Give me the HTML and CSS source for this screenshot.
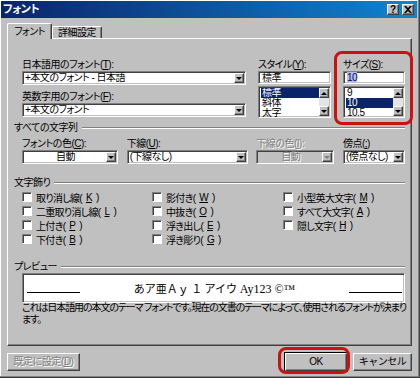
FILE: index.html
```html
<!DOCTYPE html>
<html lang="ja">
<head>
    <meta charset="UTF-8">
    <title>フォント</title>
    <link rel="stylesheet" href="styles.css">
</head>
<body>
    <div class="window">
        <div class="titlebar">
            <span class="title">フォント</span>
            <div class="caption-btns">
                <span class="cap-btn">?</span>
                <span class="cap-btn">
                    <svg width="8" height="7" viewBox="0 0 8 7"><path d="M0 0h2l2 2 2-2h2L5 3.5 8 7H6L4 5 2 7H0l3-3.5z" fill="#000"/></svg>
                </span>
            </div>
        </div>

        <div class="content">
            <div class="tabs">
                <div class="tab active">フォント</div>
                <div class="tab">詳細設定</div>
            </div>

            <div class="panel">
                <!-- font / style / size -->
                <div class="font-row">
                    <div class="col">
                        <div class="lbl">日本語用のフォント(<u>T</u>):</div>
                        <div class="combo"><span class="val">+本文のフォント - 日本語</span><span class="drop"></span></div>
                        <div class="lbl second">英数字用のフォント(<u>F</u>):</div>
                        <div class="combo"><span class="val">+本文のフォント</span><span class="drop"></span></div>
                    </div>
                    <div class="col">
                        <div class="lbl">スタイル(<u>Y</u>):</div>
                        <div class="field">標準</div>
                        <div class="listbox">
                            <div class="items">
                                <div class="item sel">標準</div>
                                <div class="item">斜体</div>
                                <div class="item">太字</div>
                            </div>
                            <div class="vscroll">
                                <span class="sbtn up"></span>
                                <span class="track"></span>
                                <span class="sbtn down"></span>
                            </div>
                        </div>
                    </div>
                    <div class="col size-col">
                        <div class="lbl">サイズ(<u>S</u>):</div>
                        <div class="field"><span class="hl">10</span></div>
                        <div class="listbox">
                            <div class="items">
                                <div class="item">9</div>
                                <div class="item sel">10</div>
                                <div class="item">10.5</div>
                            </div>
                            <div class="vscroll">
                                <span class="sbtn up"></span>
                                <span class="track"></span>
                                <span class="sbtn down"></span>
                            </div>
                        </div>
                        <div class="mark"></div>
                    </div>
                </div>

                <!-- all text -->
                <div class="group">すべての文字列</div>
                <div class="attr-row">
                    <div>
                        <div class="lbl">フォントの色(<u>C</u>):</div>
                        <div class="combo"><span class="val center">自動</span><span class="drop"></span></div>
                    </div>
                    <div>
                        <div class="lbl">下線(<u>U</u>):</div>
                        <div class="combo"><span class="val">(下線なし)</span><span class="drop"></span></div>
                    </div>
                    <div>
                        <div class="lbl disabled">下線の色(<u>I</u>):</div>
                        <div class="combo off"><span class="val center">自動</span><span class="drop"></span></div>
                    </div>
                    <div>
                        <div class="lbl">傍点(<u>;</u>)</div>
                        <div class="combo"><span class="val">(傍点なし)</span><span class="drop"></span></div>
                    </div>
                </div>

                <!-- effects -->
                <div class="group second-group">文字飾り</div>
                <div class="checks">
                    <label class="chk"><span class="box"></span>取り消し線(<u>K</u>)</label>
                    <label class="chk"><span class="box"></span>二重取り消し線(<u>L</u>)</label>
                    <label class="chk"><span class="box"></span>上付き(<u>P</u>)</label>
                    <label class="chk"><span class="box"></span>下付き(<u>B</u>)</label>
                    <label class="chk"><span class="box"></span>影付き(<u>W</u>)</label>
                    <label class="chk"><span class="box"></span>中抜き(<u>O</u>)</label>
                    <label class="chk"><span class="box"></span>浮き出し(<u>E</u>)</label>
                    <label class="chk"><span class="box"></span>浮き彫り(<u>G</u>)</label>
                    <label class="chk"><span class="box"></span>小型英大文字(<u>M</u>)</label>
                    <label class="chk"><span class="box"></span>すべて大文字(<u>A</u>)</label>
                    <label class="chk"><span class="box"></span>隠し文字(<u>H</u>)</label>
                </div>

                <!-- preview -->
                <div class="group third-group">プレビュー</div>
                <div class="preview">
                    <span class="rule"></span>
                    <span class="sample"><span class="jp">あア亜Ａｙ １ アイウ</span> <span class="en">Ay123 ©™</span></span>
                    <span class="rule"></span>
                </div>
                <p class="desc">これは日本語用の本文のテーマ フォントです。現在の文書のテーマによって、使用されるフォントが決まり<br>ます。</p>
            </div>

            <div class="buttons">
                <button class="btn wide" disabled>既定に設定(<u>D</u>)</button>
                <div class="right-btns">
                    <div class="ok-wrap">
                        <button class="btn default">OK</button>
                        <div class="mark"></div>
                    </div>
                    <button class="btn">キャンセル</button>
                </div>
            </div>
        </div>
    </div>
</body>
</html>
```

FILE: styles.css
```css
body {
    margin: 0;
    padding: 0;
    font-family: 'Liberation Sans', 'Noto Sans CJK JP', sans-serif;
    font-size: 10px;
    letter-spacing: -0.5px;
    font-feature-settings: "palt";
    text-autospace: no-autospace;
    color: #000;
    background: #c0c0c0;
}

u {
    text-decoration: underline;
    text-underline-offset: 1px;
}

/* Window frame */
.window {
    width: 420px;
    height: 378px;
    box-sizing: border-box;
    padding: 1px 2px 2px 1px;
    background: #c0c0c0;
    border-right: 1px solid #404040;
    border-bottom: 1px solid #404040;
    box-shadow: inset -1px -1px #808080, inset 1px 1px #fff;
}

.titlebar {
    height: 17px;
    display: flex;
    justify-content: space-between;
    align-items: center;
    padding: 0 3px 0 2px;
    background: linear-gradient(to right, #0a246a, #1084d0);
}

.title {
    color: #fff;
    font-weight: bold;
    font-size: 11px;
    line-height: 17px;
}

.caption-btns {
    display: flex;
    gap: 3px;
}

.cap-btn {
    width: 12px;
    height: 11px;
    box-sizing: border-box;
    display: flex;
    align-items: center;
    justify-content: center;
    background: #c0c0c0;
    border-top: 1px solid #fff;
    border-left: 1px solid #fff;
    border-right: 1px solid #404040;
    border-bottom: 1px solid #404040;
    box-shadow: inset -1px -1px #808080;
    font-weight: bold;
    font-size: 10px;
    line-height: 9px;
    letter-spacing: 0;
}

.content {
    padding: 0 5px 0 6px;
}

/* Tabs */
.tabs {
    display: flex;
    align-items: flex-end;
    height: 15px;
    margin-top: 5px;
}

.tab {
    height: 12px;
    box-sizing: border-box;
    width: 50px;
    text-align: center;
    line-height: 12px;
    border-top: 1px solid #fff;
    border-left: 1px solid #fff;
    border-right: 1px solid #404040;
    border-radius: 2px 2px 0 0;
    box-shadow: inset -1px 0 #808080;
}

.tab.active {
    width: 45px;
    height: 16px;
    line-height: 16px;
    margin-bottom: -1px;
    position: relative;
    z-index: 1;
    background: #c0c0c0;
}

/* Panel */
.panel {
    height: 308px;
    box-sizing: border-box;
    padding: 19px 6px 0 14px;
    border-top: 1px solid #fff;
    border-left: 1px solid #fff;
    border-right: 1px solid #404040;
    border-bottom: 1px solid #404040;
    box-shadow: inset -1px -1px #808080;
}

.lbl {
    height: 13px;
    line-height: 13px;
    white-space: nowrap;
}

.lbl.second {
    margin-top: 5px;
}

.lbl.disabled {
    color: #808080;
    text-shadow: 1px 1px #fff;
}

.font-row {
    display: grid;
    grid-template-columns: 224px 73px 62px;
    column-gap: 12px;
}

.size-col {
    position: relative;
}

.mark {
    position: absolute;
    border: 3px solid #cc1111;
    border-radius: 8px;
}

.size-col .mark {
    top: -7px;
    left: -9px;
    right: -8px;
    bottom: -7px;
}

/* sunken fields */
.combo, .field, .listbox, .preview {
    box-sizing: border-box;
    background: #fff;
    border-top: 1px solid #808080;
    border-left: 1px solid #808080;
    border-right: 1px solid #fff;
    border-bottom: 1px solid #fff;
    box-shadow: inset 1px 1px #404040, inset -1px -1px #c0c0c0;
}

.combo {
    height: 14px;
    display: flex;
    align-items: center;
    padding: 0 1px 0 2px;
}

.combo .val {
    flex: 1;
    line-height: 12px;
    white-space: nowrap;
    overflow: hidden;
}

.combo .val.center {
    text-align: center;
}

.drop, .sbtn {
    width: 10px;
    height: 10px;
    box-sizing: border-box;
    display: flex;
    align-items: center;
    justify-content: center;
    background: #c0c0c0;
    border-top: 1px solid #fff;
    border-left: 1px solid #fff;
    border-right: 1px solid #404040;
    border-bottom: 1px solid #404040;
    box-shadow: inset -1px -1px #808080;
}

.drop::after, .sbtn.down::after {
    content: "";
    border-left: 3px solid transparent;
    border-right: 3px solid transparent;
    border-top: 3px solid #000;
}

.sbtn.up::after {
    content: "";
    border-left: 3px solid transparent;
    border-right: 3px solid transparent;
    border-bottom: 3px solid #000;
}

.combo.off {
    background: #c0c0c0;
    color: #808080;
    text-shadow: 1px 1px #fff;
}

.combo.off .drop::after {
    border-top-color: #808080;
}

.field {
    height: 13px;
    line-height: 11px;
    padding: 0 3px;
}

.hl {
    background: #b8c0e0;
    color: #000080;
}

.listbox {
    margin-top: 2px;
    height: 32px;
    display: flex;
    padding: 0 1px 0 0;
}

.items {
    flex: 1;
    padding: 1px 0 0 2px;
    overflow: hidden;
}

.item {
    height: 10px;
    line-height: 10px;
    padding-left: 1px;
    overflow: hidden;
}

.item.sel {
    background: #0a246a;
    color: #fff;
}

.vscroll {
    width: 10px;
    padding: 1px 0;
    display: flex;
    flex-direction: column;
}

.track {
    flex: 1;
    background: #e4e4e4;
}

/* group headings */
.group {
    display: flex;
    align-items: center;
    margin: 3px 0 0 -8px;
    height: 13px;
    line-height: 13px;
}

.group::after {
    content: "";
    flex: 1;
    margin-left: 4px;
    border-top: 1px solid #808080;
    border-bottom: 1px solid #fff;
}

.second-group {
    margin-top: 12px;
}

.third-group {
    margin-top: 14px;
}

.attr-row {
    display: grid;
    grid-template-columns: 96px 121px 78px 62px;
    justify-content: space-between;
    margin-top: 3px;
}

/* checkboxes */
.checks {
    display: grid;
    grid-template-columns: 130px 131px 1fr;
    grid-template-rows: repeat(4, 14px);
    grid-auto-flow: column;
    margin-top: 1px;
}

.chk {
    display: flex;
    align-items: center;
    gap: 4px;
    white-space: nowrap;
    letter-spacing: -0.7px;
}

.box {
    width: 10px;
    height: 10px;
    box-sizing: border-box;
    background: #fff;
    border-top: 1px solid #808080;
    border-left: 1px solid #808080;
    border-right: 1px solid #fff;
    border-bottom: 1px solid #fff;
    box-shadow: inset 1px 1px #404040;
}

/* preview */
.preview {
    height: 30px;
    display: flex;
    align-items: flex-end;
    justify-content: space-between;
    padding: 0 2px 9px 4px;
}

.rule {
    width: 53px;
    border-top: 1px solid #000;
}

.sample {
    line-height: 16px;
    margin-bottom: -5px;
    white-space: nowrap;
    letter-spacing: 0;
}

.sample .jp {
    font-family: 'Noto Sans CJK JP', sans-serif;
    font-size: 11px;
    font-feature-settings: normal;
}

.sample .en {
    font-family: 'Liberation Serif', serif;
    font-size: 12px;
}

.desc {
    margin: -1px 0 0;
    line-height: 12px;
    letter-spacing: -1.1px;
    white-space: nowrap;
}

/* bottom buttons */
.buttons {
    display: flex;
    justify-content: space-between;
    margin-top: 7px;
}

.right-btns {
    display: flex;
    gap: 6px;
}

.ok-wrap {
    position: relative;
}

.ok-wrap .mark {
    top: -6px;
    left: -7px;
    right: -3px;
    bottom: -3px;
}

.btn {
    height: 18px;
    width: 59px;
    padding: 0;
    font-family: inherit;
    font-size: 10px;
    letter-spacing: -0.5px;
    line-height: 14px;
    color: #000;
    background: #c0c0c0;
    border-top: 1px solid #fff;
    border-left: 1px solid #fff;
    border-right: 1px solid #404040;
    border-bottom: 1px solid #404040;
    box-shadow: inset -1px -1px #808080;
}

.btn.wide {
    width: 73px;
}

.btn:disabled {
    color: #808080;
    text-shadow: 1px 1px #fff;
}

.btn.default {
    width: 62px;
    outline: 1px solid #000;
}
```
